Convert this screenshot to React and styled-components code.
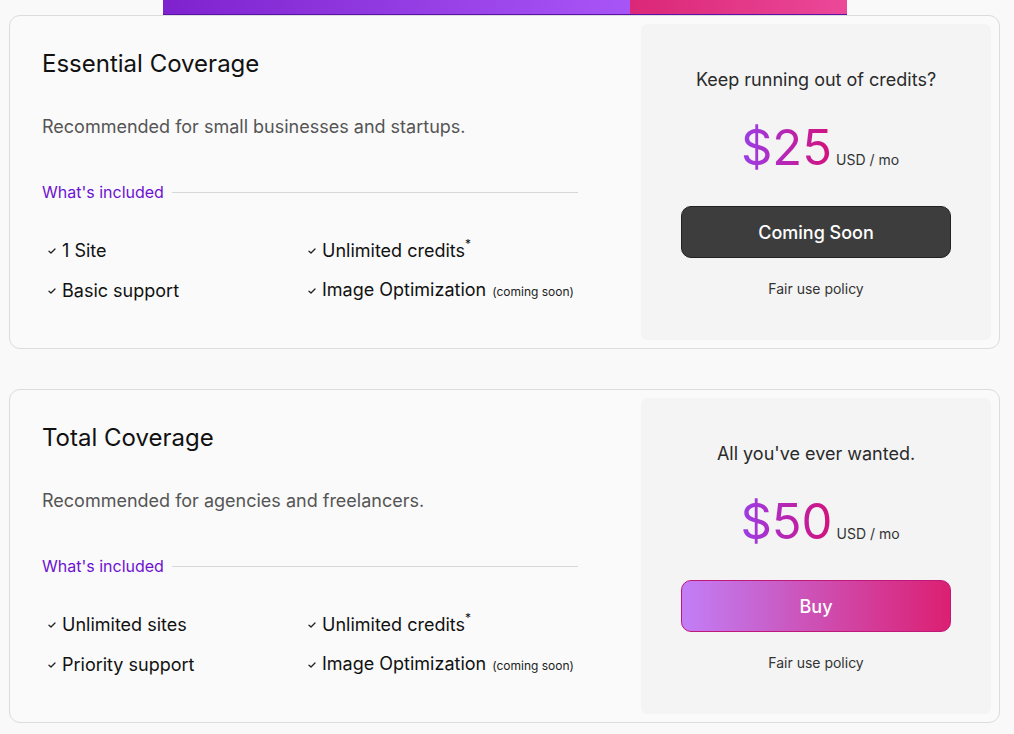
import styled, { createGlobalStyle } from 'styled-components';

const GlobalStyle = createGlobalStyle`
  html, body {
    margin: 0;
    padding: 0;
    background: #f9f9f9;
    font-family: Inter, "Noto Sans", sans-serif;
    color: #222;
  }
`;

const Page = styled.div`
  padding: 0 14px 20px 9px;
`;

const TabBar = styled.div`
  display: flex;
  margin-left: 154px;
  width: 684px;
  height: 14px;
  border-bottom: 1px solid #5b12a8;
`;

const TabSegment = styled.div`
  flex: ${p => p.grow};
  background: ${p => p.bg};
`;

const Cards = styled.div`
  display: flex;
  flex-direction: column;
  gap: 40px;
`;

const Card = styled.div`
  display: flex;
  height: 334px;
  box-sizing: border-box;
  background: #fafafa;
  border: 1px solid #dcdcdc;
  border-radius: 11px;
  padding: 8px;
`;

const Info = styled.div`
  flex: 1;
  padding: 25px 63px 0 24px;
`;

const Title = styled.h2`
  margin: 0;
  font-size: 24px;
  font-weight: 400;
  line-height: 30px;
  color: #111;
`;

const Subtitle = styled.p`
  margin: 36px 0 0;
  font-size: 18px;
  line-height: 24px;
  color: #555;
`;

const IncludedRow = styled.div`
  display: flex;
  align-items: center;
  gap: 8px;
  margin-top: 43px;
`;

const IncludedLabel = styled.span`
  font-size: 16px;
  line-height: 20px;
  color: #6d12d2;
  white-space: nowrap;
`;

const Rule = styled.div`
  flex: 1;
  height: 1px;
  background: #d8d8d8;
`;

const Features = styled.ul`
  list-style: none;
  margin: 37px 0 0;
  padding: 0 0 0 5px;
  display: grid;
  grid-template-columns: 260px 1fr;
  row-gap: 15px;
`;

const Feature = styled.li`
  display: flex;
  align-items: center;
  gap: 5px;
  font-size: 18px;
  line-height: 24px;
  color: #111;
  white-space: nowrap;
`;

const Sup = styled.sup`
  font-size: 12px;
  line-height: 0;
  position: relative;
  top: -2px;
`;

const Small = styled.span`
  font-size: 12px;
  margin-left: 6px;
  color: #222;
`;

const Panel = styled.div`
  width: 350px;
  background: #f4f4f4;
  border-radius: 6px;
  display: flex;
  flex-direction: column;
  align-items: center;
  padding-top: 44px;
  box-sizing: border-box;
`;

const Tagline = styled.div`
  font-size: 18px;
  line-height: 24px;
  color: #2a2a2a;
`;

const PriceRow = styled.div`
  display: flex;
  align-items: baseline;
  margin-top: 28px;
  margin-left: 8px;
`;

const Amount = styled.span`
  font-size: 49px;
  line-height: 56px;
  font-weight: 400;
  background: linear-gradient(90deg, #9a3fe6 0%, #b527b8 45%, #d3127a 100%);
  -webkit-background-clip: text;
  background-clip: text;
  color: transparent;
`;

const Unit = styled.span`
  font-size: 14px;
  color: #333;
  margin-left: 4px;
`;

const ActionButton = styled.button`
  margin-top: 30px;
  width: 270px;
  height: 52px;
  border-radius: 10px;
  font-family: inherit;
  font-size: 18px;
  font-weight: 500;
  color: #fff;
  cursor: pointer;
  border: 1px solid ${p => (p.primary ? '#c0177a' : '#222')};
  background: ${p =>
    p.primary
      ? 'linear-gradient(90deg, #c27ef7 0%, #c763cf 30%, #d2419f 65%, #dc1f72 100%)'
      : '#3d3d3d'};
`;

const Policy = styled.div`
  margin-top: 22px;
  font-size: 14px;
  color: #333;
`;

const Check = () => (
  <svg width="10" height="10" viewBox="0 0 10 10" style={{ flexShrink: 0 }}>
    <path d="M2 5.2 L4 7 L8 3" fill="none" stroke="#222" strokeWidth="1.3" strokeLinecap="round" strokeLinejoin="round" />
  </svg>
);

const plans = [
  {
    title: 'Essential Coverage',
    subtitle: 'Recommended for small businesses and startups.',
    tagline: 'Keep running out of credits?',
    price: '$25',
    button: 'Coming Soon',
    primary: false,
    features: ['1 Site', 'credits', 'Basic support', 'image'],
  },
  {
    title: 'Total Coverage',
    subtitle: 'Recommended for agencies and freelancers.',
    tagline: "All you've ever wanted.",
    price: '$50',
    button: 'Buy',
    primary: true,
    features: ['Unlimited sites', 'credits', 'Priority support', 'image'],
  },
];

const renderFeature = f => {
  if (f === 'credits') {
    return (
      <>
        Unlimited credits<Sup>*</Sup>
      </>
    );
  }
  if (f === 'image') {
    return (
      <>
        Image Optimization<Small>(coming soon)</Small>
      </>
    );
  }
  return f;
};

export default function App() {
  return (
    <>
      <GlobalStyle />
      <Page>
        <TabBar>
          <TabSegment grow={467} bg="linear-gradient(90deg, #7e22ce, #a855f7)" />
          <TabSegment grow={217} bg="linear-gradient(90deg, #db2777, #ec4899)" />
        </TabBar>
        <Cards>
          {plans.map(plan => (
            <Card key={plan.title}>
              <Info>
                <Title>{plan.title}</Title>
                <Subtitle>{plan.subtitle}</Subtitle>
                <IncludedRow>
                  <IncludedLabel>What's included</IncludedLabel>
                  <Rule />
                </IncludedRow>
                <Features>
                  {plan.features.map(f => (
                    <Feature key={f}>
                      <Check />
                      <span>{renderFeature(f)}</span>
                    </Feature>
                  ))}
                </Features>
              </Info>
              <Panel>
                <Tagline>{plan.tagline}</Tagline>
                <PriceRow>
                  <Amount>{plan.price}</Amount>
                  <Unit>USD / mo</Unit>
                </PriceRow>
                <ActionButton primary={plan.primary}>{plan.button}</ActionButton>
                <Policy>Fair use policy</Policy>
              </Panel>
            </Card>
          ))}
        </Cards>
      </Page>
    </>
  );
}
